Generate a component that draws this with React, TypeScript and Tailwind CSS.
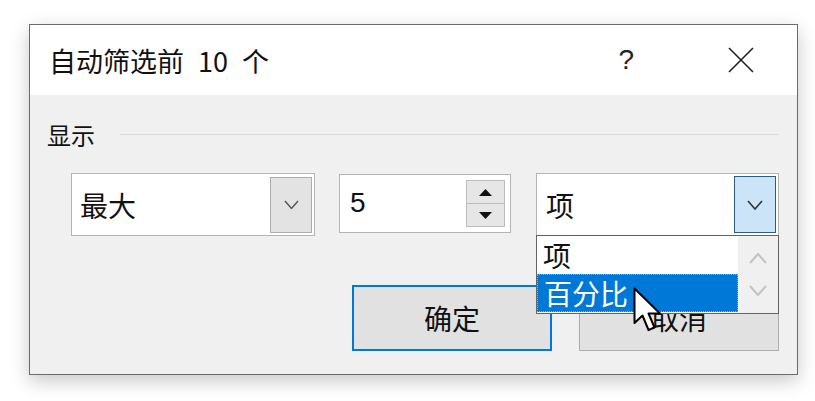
import React from "react";

const cjk = { fontFamily: '"Noto Sans CJK SC", "Noto Sans", sans-serif' };

const Chevron: React.FC<{ w?: number; color?: string; up?: boolean; sw?: number }> = ({
  w = 14,
  color = "#444",
  up = false,
  sw = 1.4,
}) => (
  <svg width={w} height={w / 2 + 2} viewBox={`0 0 ${w} ${w / 2 + 2}`}>
    <polyline
      points={up ? `1,${w / 2 + 1} ${w / 2},1 ${w - 1},${w / 2 + 1}` : `1,1 ${w / 2},${w / 2 + 1} ${w - 1},1`}
      fill="none"
      stroke={color}
      strokeWidth={sw}
    />
  </svg>
);

const Cursor: React.FC = () => (
  <svg width="30" height="46" viewBox="0 0 30 46">
    <path
      d="M1.5 1.5 L1.5 36 L9.5 28.5 L15.5 43 L21.5 40.5 L15.5 26.5 L27 26.5 Z"
      fill="#fff"
      stroke="#000"
      strokeWidth="2"
      strokeLinejoin="round"
    />
  </svg>
);

const App: React.FC = () => {
  return (
    <div className="w-[815px] h-[401px] bg-white pt-[24px] pl-[29px] overflow-hidden" style={cjk}>
      <div className="relative w-[769px] h-[351px] border border-[#6b6b6b] bg-[#f0f0f0] shadow-[0_6px_18px_rgba(0,0,0,0.22)] flex flex-col">
        {/* title bar */}
        <div className="h-[70px] bg-white flex items-center pl-[19px] shrink-0">
          <div className="flex-1 text-[27px] text-[#111] leading-none [word-spacing:8px]">自动筛选前 10 个</div>
          <div className="text-[28px] text-[#222] leading-none mr-[94px]" style={{ fontFamily: '"Liberation Sans", sans-serif' }}>
            ?
          </div>
          <svg width="26" height="26" viewBox="0 0 26 26" className="mr-[43px]">
            <path d="M1 1 L25 25 M25 1 L1 25" stroke="#222" strokeWidth="1.6" />
          </svg>
        </div>

        {/* body */}
        <div className="flex-1 flex flex-col">
          <div className="flex items-center mt-[25px] pl-[17px] pr-[18px] h-[30px]">
            <span className="text-[24px] text-[#111] leading-none">显示</span>
            <div className="flex-1 ml-[25px] h-[2px] border-t border-[#dcdcdc] border-b-white" />
          </div>

          <div className="flex items-start mt-[23px] pl-[41px]">
            {/* combo 1 */}
            <div className="w-[244px] h-[63px] border border-[#b4b4b4] bg-white flex items-center">
              <span className="flex-1 pl-[8px] text-[28px] text-[#111] leading-none">最大</span>
              <div className="w-[42px] h-[56px] mr-[2px] bg-[#e3e3e3] border border-[#adadad] flex items-center justify-center">
                <Chevron w={15} color="#555" />
              </div>
            </div>

            {/* spin */}
            <div className="ml-[24px] mt-[1px] w-[172px] h-[59px] border border-[#b4b4b4] bg-white flex items-start">
              <span className="flex-1 pl-[10px] pt-[14px] text-[28px] text-[#111] leading-none" style={{ fontFamily: '"Liberation Sans", sans-serif' }}>
                5
              </span>
              <div className="mt-[5px] mr-[5px] w-[39px] h-[47px] flex flex-col border border-[#bdbdbd]">
                <div className="flex-1 bg-[#e6e6e6] border-b border-[#bdbdbd] flex items-center justify-center">
                  <svg width="13" height="7" viewBox="0 0 13 7">
                    <path d="M0 7 L6.5 0 L13 7 Z" fill="#111" />
                  </svg>
                </div>
                <div className="flex-1 bg-[#e6e6e6] flex items-center justify-center">
                  <svg width="13" height="7" viewBox="0 0 13 7">
                    <path d="M0 0 L6.5 7 L13 0 Z" fill="#111" />
                  </svg>
                </div>
              </div>
            </div>

            {/* combo 3 with open list */}
            <div className="relative ml-[25px] w-[243px] h-[63px]">
              <div className="w-full h-full border border-[#b4b4b4] bg-white flex items-center">
                <span className="flex-1 pl-[9px] text-[28px] text-[#111] leading-none">项</span>
                <div className="w-[42px] h-[57px] mr-[2px] bg-[#cce4f7] border border-[#2c5b87] flex items-center justify-center">
                  <Chevron w={16} color="#333" sw={1.6} />
                </div>
              </div>
              <div className="absolute left-0 top-[62px] w-[243px] h-[79px] z-10 border border-[#646464] bg-white flex">
                <div className="flex-1 flex flex-col">
                  <div className="h-[38px] pl-[6px] flex items-center text-[28px] text-[#111] leading-none">项</div>
                  <div className="h-[38px] pl-[6px] flex items-center text-[28px] text-white leading-none bg-[#0078d7] border border-dotted border-[#9ab]">
                    百分比
                  </div>
                </div>
                <div className="w-[40px] bg-[#f0f0f0] flex flex-col items-center justify-around py-[6px]">
                  <Chevron w={18} color="#c2c2c2" up sw={2} />
                  <Chevron w={18} color="#c2c2c2" sw={2} />
                </div>
              </div>
            </div>
          </div>

          <div className="flex justify-end mt-[49px] pr-[18px] gap-[27px]">
            <div className="w-[200px] h-[66px] bg-[#e1e1e1] border-2 border-[#0078d7] flex items-center justify-center text-[28px] text-[#111] leading-none">
              确定
            </div>
            <div className="w-[200px] h-[66px] bg-[#e1e1e1] border border-[#adadad] flex items-center justify-center text-[28px] text-[#111] leading-none">
              取消
            </div>
          </div>
        </div>

        <div className="absolute left-[603px] top-[262px] z-20">
          <Cursor />
        </div>
      </div>
    </div>
  );
};

export default App;
